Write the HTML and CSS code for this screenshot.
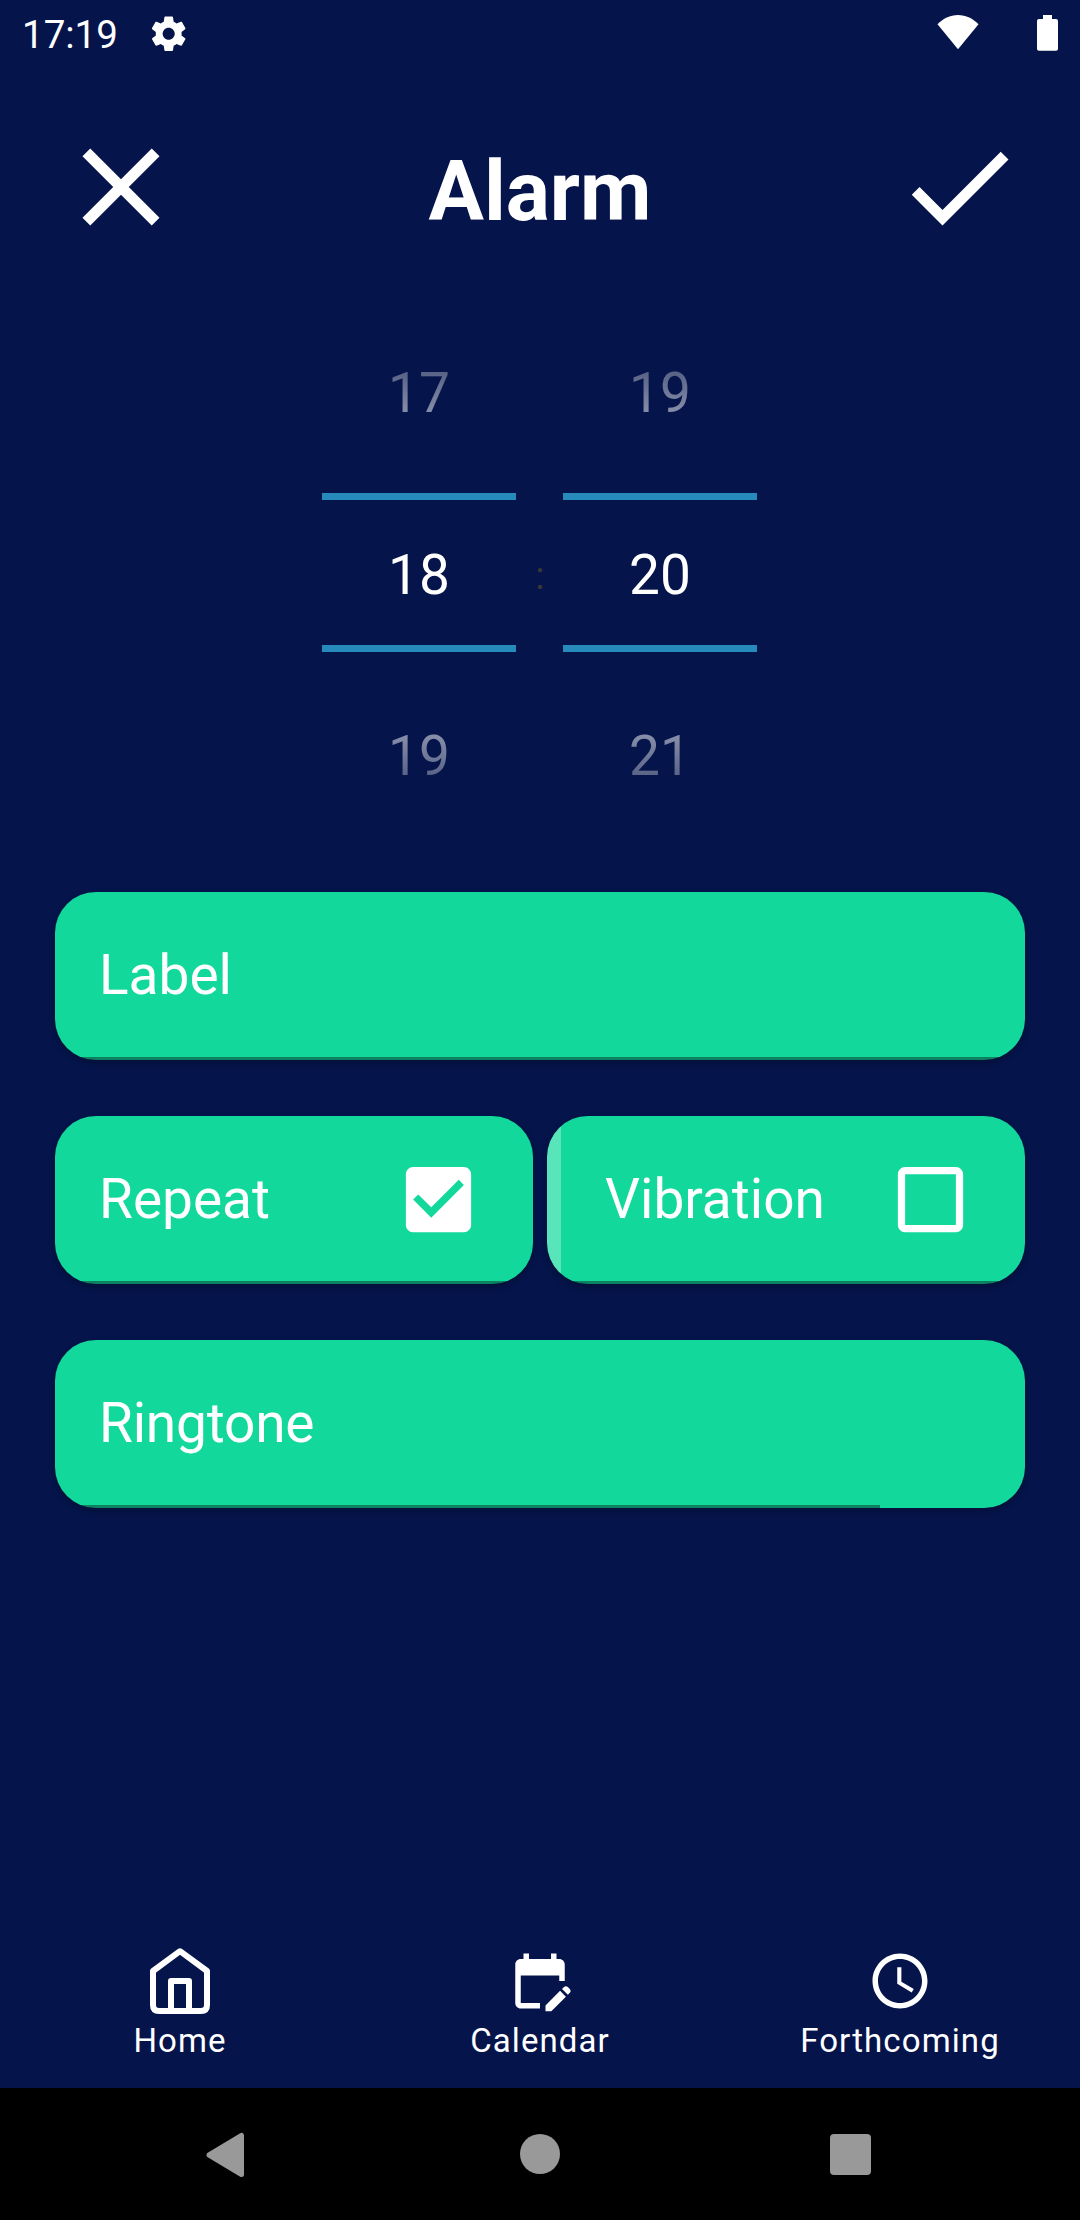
FILE: index.html
```html
<!DOCTYPE html>
<html lang="en">
<head>
<meta charset="utf-8">
<title>Alarm</title>
<link rel="stylesheet" href="styles.css">
</head>
<body>
<div class="screen">
  <div class="status">
    <span class="clock">17:19</span>
    <svg class="gear" viewBox="0 0 24 24"><path d="M19.43 12.98c.04-.32.07-.64.07-.98s-.03-.66-.07-.98l2.11-1.65c.19-.15.24-.42.12-.64l-2-3.46c-.12-.22-.39-.3-.61-.22l-2.49 1c-.52-.4-1.08-.73-1.69-.98l-.38-2.65C14.46 2.18 14.25 2 14 2h-4c-.25 0-.46.18-.49.42l-.38 2.65c-.61.25-1.17.59-1.69.98l-2.49-1c-.23-.09-.49 0-.61.22l-2 3.46c-.13.22-.07.49.12.64l2.11 1.65c-.04.32-.07.65-.07.98s.03.66.07.98l-2.11 1.65c-.19.15-.24.42-.12.64l2 3.46c.12.22.39.3.61.22l2.49-1c.52.4 1.08.73 1.69.98l.38 2.65c.03.24.24.42.49.42h4c.25 0 .46-.18.49-.42l.38-2.65c.61-.25 1.17-.59 1.69-.98l2.49 1c.23.09.49 0 .61-.22l2-3.46c.12-.22.07-.49-.12-.64l-2.11-1.65zM12 15.5c-1.93 0-3.5-1.57-3.5-3.5s1.57-3.5 3.5-3.5 3.5 1.57 3.5 3.5-1.57 3.5-3.5 3.5z"/></svg>
    <svg class="wifi" viewBox="0 0 42 36"><path d="M21 35.3.5 10.3C6 4.500 13 1 21 1s15 3.500 20.500 9.300z"/></svg>
    <svg class="battery" viewBox="0 0 21 36"><path d="M6 0h9v4h4q2 0 2 2v28q0 1.700-2 1.700H2q-2 0-2-1.700V6q0-2 2-2h4z"/></svg>
  </div>

  <header class="header">
    <svg class="action" viewBox="0 0 24 24"><path d="M19 6.410 17.590 5 12 10.590 6.410 5 5 6.410 10.590 12 5 17.590 6.410 19 12 13.410 17.590 19 19 17.590 13.410 12z"/></svg>
    <h1 class="title">Alarm</h1>
    <svg class="action" viewBox="0 0 24 24"><path d="M9 16.170 4.830 12l-1.420 1.410L9 19 21 7l-1.410-1.410z"/></svg>
  </header>

  <div class="picker">
    <div class="wheel">
      <div class="value before">17</div>
      <div class="value current">18</div>
      <div class="value after">19</div>
    </div>
    <div class="colon">:</div>
    <div class="wheel">
      <div class="value before">19</div>
      <div class="value current">20</div>
      <div class="value after">21</div>
    </div>
  </div>

  <main class="options">
    <div class="card"><span>Label</span></div>
    <div class="pair">
      <div class="card">
        <span>Repeat</span>
        <svg class="check" viewBox="0 0 24 24"><path d="M19 3H5c-1.110 0-2 .9-2 2v14c0 1.100.89 2 2 2h14c1.110 0 2-.9 2-2V5c0-1.100-.89-2-2-2zm-9 14-5-5 1.410-1.410L10 14.170l7.590-7.590L19 8l-9 9z"/></svg>
      </div>
      <div class="card striped">
        <span>Vibration</span>
        <svg class="check" viewBox="0 0 24 24"><path d="M19 5v14H5V5h14m0-2H5c-1.100 0-2 .9-2 2v14c0 1.100.9 2 2 2h14c1.100 0 2-.9 2-2V5c0-1.100-.9-2-2-2z"/></svg>
      </div>
    </div>
    <div class="card partial"><span>Ringtone</span></div>
  </main>

  <nav class="tabs">
    <div class="tab">
      <svg class="tab-icon" viewBox="0 0 66 66"><g class="line"><path d="M33 3.200 6 23v34q0 6 6 6h42q6 0 6-6V23z"/><path d="M24 63V33h18v30"/></g></svg>
      <span>Home</span>
    </div>
    <div class="tab">
      <svg class="tab-icon" viewBox="0 0 24 24"><path d="M12 22H5c-1.110 0-2-.9-2-2l.01-14c0-1.100.88-2 1.990-2h1V2h2v2h8V2h2v2h1c1.100 0 2 .9 2 2v6h-2v-2H5v10h7v2zm10.130-5.010.71-.71c.39-.39.39-1.020 0-1.410l-.71-.71c-.39-.39-1.020-.39-1.410 0l-.71.71 2.120 2.120zm-.71.71-5.300 5.300H14v-2.120l5.300-5.300 2.120 2.120z"/></svg>
      <span>Calendar</span>
    </div>
    <div class="tab">
      <svg class="tab-icon" viewBox="0 0 24 24"><path d="M11.990 2C6.470 2 2 6.480 2 12s4.470 10 9.990 10C17.520 22 22 17.520 22 12S17.520 2 11.990 2zM12 20c-4.420 0-8-3.580-8-8s3.580-8 8-8 8 3.580 8 8-3.580 8-8 8zm.5-13H11v6l5.250 3.150.75-1.230-4.500-2.670z"/></svg>
      <span>Forthcoming</span>
    </div>
  </nav>

  <div class="system">
    <svg class="back" viewBox="0 0 40 46"><path d="M3 23 35.500 3.500v39z"/></svg>
    <div class="home"></div>
    <div class="recent"></div>
  </div>
</div>
</body>
</html>
```
FILE: styles.css
```css
* {
  box-sizing: border-box;
}

body {
  margin: 0;
  background: #05144a;
  color: #fff;
  font-family: Roboto, sans-serif;
}

svg {
  display: block;
  fill: currentColor;
  flex: none;
}

.screen {
  width: 1080px;
  height: 2220px;
  display: flex;
  flex-direction: column;
}

.status {
  height: 66px;
  display: flex;
  align-items: flex-start;
  padding: 0 22px;
}

.clock {
  width: 126px;
  font-size: 38.5px;
  line-height: 70px;
}

.gear {
  width: 41.4px;
  height: 41.4px;
  margin-top: 12.6px;
}

.wifi {
  width: 42px;
  height: 36px;
  margin-top: 14px;
  margin-left: auto;
}

.battery {
  width: 21px;
  height: 36px;
  margin-top: 15px;
  margin-left: 58px;
}

.header {
  display: flex;
  justify-content: space-between;
  align-items: center;
  height: 132px;
  margin-top: 55px;
  padding: 0 55px;
}

.action {
  width: 132px;
  height: 132px;
}

.title {
  margin: 9px 0 0;
  font-size: 82.5px;
  line-height: 96px;
  font-weight: 700;
}

.picker {
  display: flex;
  justify-content: center;
  height: 545px;
  margin-top: 49px;
  padding-right: 1px;
}

.wheel {
  width: 194px;
}

.value {
  height: 182px;
  font-size: 55px;
  line-height: 182px;
  text-align: center;
}

.before {
  mask-image: linear-gradient(rgba(0, 0, 0, 0.02), rgba(0, 0, 0, 0.84));
}

.current {
  height: 159px;
  margin: 9px 0 13px;
  padding-top: 3px;
  border: solid #268abb;
  border-width: 7px 0;
  line-height: 145px;
}

.after {
  mask-image: linear-gradient(rgba(0, 0, 0, 0.84), rgba(0, 0, 0, 0.02));
}

.colon {
  width: 47px;
  padding-left: 1px;
  color: #373737;
  font-size: 38.5px;
  line-height: 547px;
  text-align: center;
}

.options {
  display: flex;
  flex-direction: column;
  gap: 56px;
  margin-top: 45px;
  padding: 0 55px;
}

.pair {
  display: grid;
  grid-template-columns: 1fr 1fr;
  gap: 14px;
}

.card {
  display: flex;
  align-items: center;
  justify-content: space-between;
  height: 168px;
  padding: 0 51px 0 44px;
  border-radius: 41px;
  background: linear-gradient(#0d8260, #0d8260) 0 100% / 100% 3px no-repeat #12d99b;
  box-shadow: 0 3px 6px rgba(0, 0, 0, 0.25);
  font-size: 55px;
  line-height: 64px;
}

.card span {
  margin-top: -2px;
}

.partial {
  background-size: 825px 3px;
  letter-spacing: -0.2px;
}

.striped {
  padding-left: 58px;
  background:
    linear-gradient(#0d8260, #0d8260) 14px 100% / 100% 3px no-repeat,
    linear-gradient(#59e5ba, #59e5ba) 0 0 / 14px 100% no-repeat,
    #12d99b;
}

.check {
  width: 87px;
  height: 87px;
  margin-bottom: 1px;
}

.tabs {
  display: grid;
  grid-template-columns: repeat(3, 1fr);
  height: 140px;
  margin-top: auto;
}

.tab {
  display: flex;
  flex-direction: column;
  align-items: center;
  font-size: 33px;
  line-height: 39px;
  letter-spacing: 1.1px;
}

.tab-icon {
  width: 66px;
  height: 66px;
  margin-bottom: 7px;
}

.line {
  fill: none;
  stroke: currentColor;
  stroke-width: 6px;
  stroke-linejoin: round;
}

.system {
  display: flex;
  align-items: flex-start;
  height: 132px;
  padding-left: 206px;
  background: #000;
  color: #999;
}

.back {
  width: 40px;
  height: 46px;
  margin-top: 43.5px;
  stroke: currentColor;
  stroke-width: 5px;
  stroke-linejoin: round;
}

.home {
  width: 40px;
  height: 40px;
  margin: 46px 0 0 274px;
  border-radius: 50%;
  background: currentColor;
}

.recent {
  width: 41px;
  height: 41px;
  margin: 46px 0 0 270px;
  border-radius: 4px;
  background: currentColor;
}
```
